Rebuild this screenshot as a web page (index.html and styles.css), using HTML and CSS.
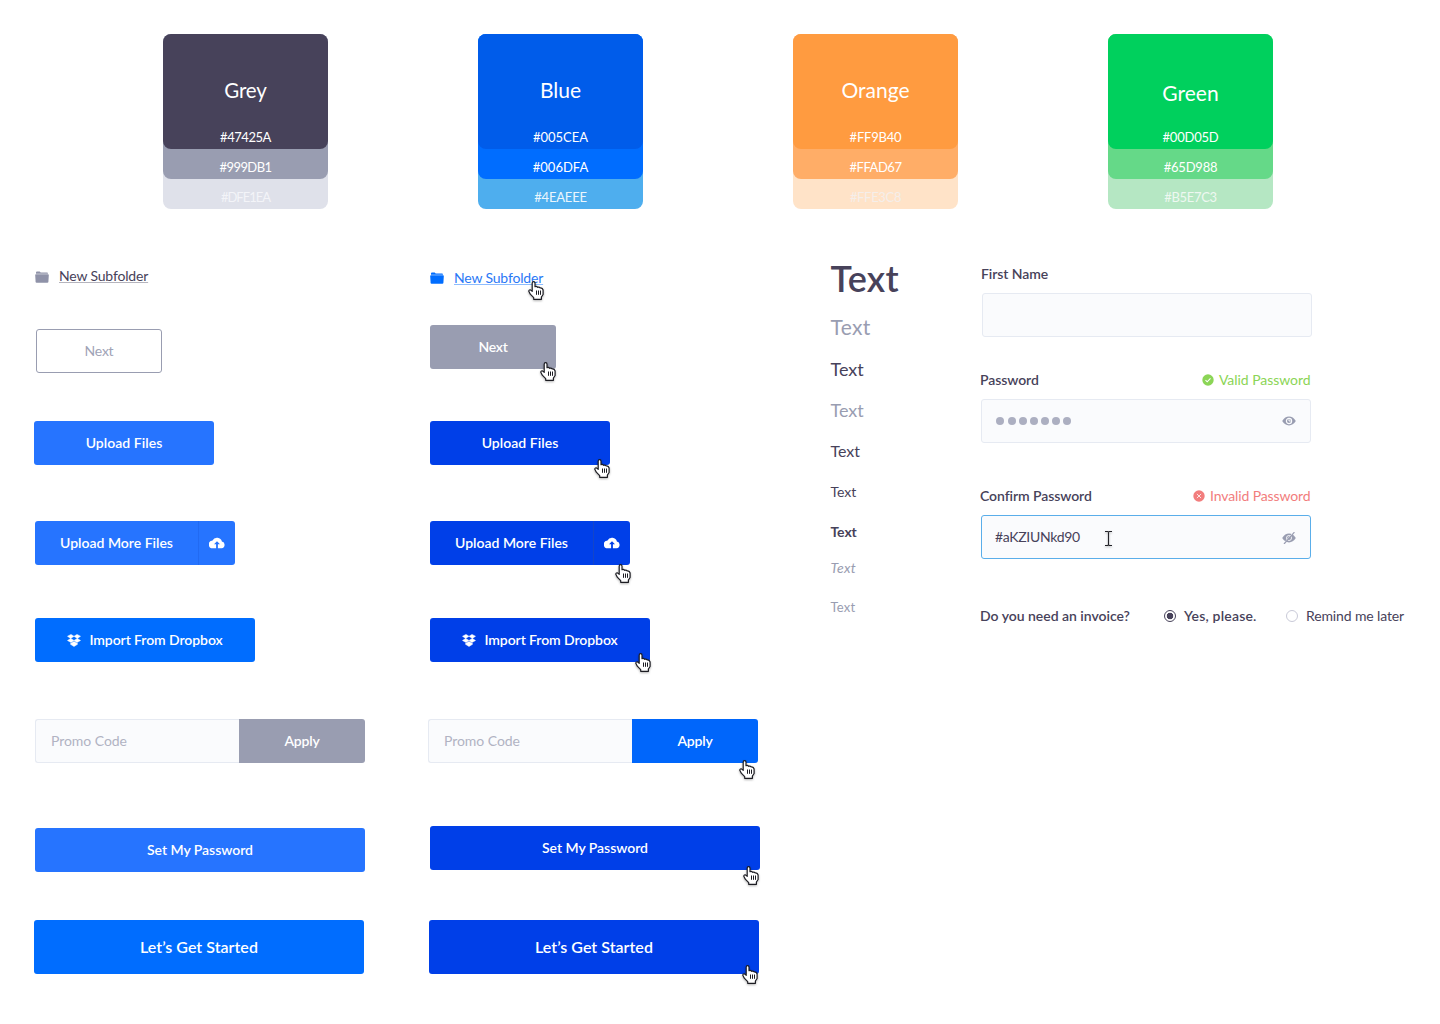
FILE: index.html
```html
<!DOCTYPE html>
<html lang="en">
<head>
<meta charset="utf-8">
<title>Style guide</title>
<link rel="stylesheet" href="styles.css">
</head>
<body>
<svg class="defs" aria-hidden="true">
  <symbol id="hand" viewBox="0 0 18 21">
    <path d="M4.2 10.3V2.3Q4.2.7 5.6.7T7 2.3V5.7Q8.600 5 9.700 6.300Q11.200 5.700 12.200 7Q14.600 6.700 15.100 9V13.500L13.400 16V18.300H5.700V16.600L2.300 13.200L.8 10.300Q.8 8.600 2.400 8.900L4.200 10.300Z" fill="#fff" stroke="#1c1c22" stroke-width="1.200" stroke-linejoin="round"/>
    <path d="M8.500 9.500V13.800M10.500 9.500V13.800M12.500 9.500V13.800" stroke="#1c1c22" fill="none"/>
  </symbol>
  <symbol id="folder" viewBox="0 0 14 12">
    <path d="M1 2.800V1.600Q1 .6 2 .6H4.700L5.700 1.600H12Q13 1.600 13 2.800Z"/>
    <path d="M.2 4Q.2 3.200 1 3.200H13Q13.800 3.200 13.800 4L13.400 10.900Q13.300 11.700 12.400 11.700H1.600Q.7 11.700.6 10.900Z"/>
  </symbol>
  <symbol id="cloud" viewBox="0 0 16 12">
    <path fill-rule="evenodd" d="M12.900 4.600A5 5 0 0 0 3.500 3.500 3.900 3.900 0 0 0 4 11.300H12.600A3.400 3.400 0 0 0 12.900 4.600ZM8.900 7.300V11.300H7.100V7.300H5L8 4.200L11 7.300Z"/>
  </symbol>
  <symbol id="dropbox" viewBox="0 0 14 13">
    <path stroke="#fff" stroke-width=".5" d="M4 .4L7 2.300L3.700 4.400L.5 2.300ZM10 .4L13.500 2.300L10.300 4.400L7 2.300ZM.5 6.500L3.700 4.400L7 6.500L4 8.500ZM13.500 6.500L10.300 4.400L7 6.500L10 8.500ZM3.500 9.600L7 7.500L10.500 9.600V10.300L7 12.500L3.500 10.300Z"/>
  </symbol>
</svg>

<header class="palette">
  <div class="tier grey-3">
    <div class="tier grey-2">
      <div class="tier tier-main grey-1"><h2 class="swatch-name snug">Grey</h2><p class="hex tight-4">#47425A</p></div>
      <p class="hex tight-6">#999DB1</p>
    </div>
    <p class="hex tight-9">#DFE1EA</p>
  </div>
  <div class="tier blue-3">
    <div class="tier blue-2">
      <div class="tier tier-main blue-1"><h2 class="swatch-name">Blue</h2><p class="hex">#005CEA</p></div>
      <p class="hex">#006DFA</p>
    </div>
    <p class="hex tight-2">#4EAEEE</p>
  </div>
  <div class="tier orange-3">
    <div class="tier orange-2">
      <div class="tier tier-main orange-1"><h2 class="swatch-name">Orange</h2><p class="hex tight-2">#FF9B40</p></div>
      <p class="hex tight-4">#FFAD67</p>
    </div>
    <p class="hex tight-3">#FFE3C8</p>
  </div>
  <div class="tier green-3">
    <div class="tier green-2">
      <div class="tier tier-main green-1"><h2 class="swatch-name lowered">Green</h2><p class="hex tight-2">#00D05D</p></div>
      <p class="hex tight-2">#65D988</p>
    </div>
    <p class="hex tight-3">#B5E7C3</p>
  </div>
</header>

<main class="guide">
  <section class="column">
    <a class="folder-link"><svg class="folder"><use href="#folder"/></svg><span class="link-text">New Subfolder</span></a>
    <button class="btn next outline">Next</button>
    <button class="btn upload soft">Upload Files</button>
    <button class="btn more soft"><span class="more-label">Upload More Files</span><span class="more-icon"><svg class="cloud"><use href="#cloud"/></svg></span></button>
    <button class="btn import bright"><svg class="dropbox"><use href="#dropbox"/></svg>Import From Dropbox</button>
    <div class="promo"><input class="field promo-field" placeholder="Promo Code"><button class="btn apply muted">Apply</button></div>
    <button class="btn wide soft set">Set My Password</button>
    <button class="btn wide start bright">Let’s Get Started</button>
  </section>

  <section class="column hovered">
    <a class="folder-link"><svg class="folder"><use href="#folder"/></svg><span class="link-text">New Subfolder</span><svg class="hand"><use href="#hand"/></svg></a>
    <button class="btn next muted">Next<svg class="hand"><use href="#hand"/></svg></button>
    <button class="btn upload deep">Upload Files<svg class="hand"><use href="#hand"/></svg></button>
    <button class="btn more deep"><span class="more-label">Upload More Files</span><span class="more-icon"><svg class="cloud"><use href="#cloud"/></svg></span><svg class="hand"><use href="#hand"/></svg></button>
    <button class="btn import deep"><svg class="dropbox"><use href="#dropbox"/></svg>Import From Dropbox<svg class="hand"><use href="#hand"/></svg></button>
    <div class="promo"><input class="field promo-field" placeholder="Promo Code"><button class="btn apply vivid">Apply<svg class="hand"><use href="#hand"/></svg></button></div>
    <button class="btn wide deep set">Set My Password<svg class="hand"><use href="#hand"/></svg></button>
    <button class="btn wide start deep">Let’s Get Started<svg class="hand"><use href="#hand"/></svg></button>
  </section>

  <section class="type-scale">
    <p class="t-display">Text</p>
    <p class="t-20">Text</p>
    <p class="t-18">Text</p>
    <p class="t-18 t-muted">Text</p>
    <p class="t-16">Text</p>
    <p class="t-14">Text</p>
    <p class="t-bold">Text</p>
    <p class="t-italic">Text</p>
    <p class="t-13">Text</p>
  </section>

  <form class="form">
    <div class="label-row first-label"><label class="label">First Name</label></div>
    <input class="field first-field">

    <div class="label-row password-label">
      <label class="label">Password</label>
      <span class="status valid"><svg class="status-icon" viewBox="0 0 12 12"><circle cx="6" cy="6" r="5.700" fill="currentColor"/><path d="M3.500 6.200L5.200 7.800L8.500 4.400" fill="none" stroke="#fff" stroke-width="1.100"/></svg>Valid Password</span>
    </div>
    <div class="field password-field">
      <span class="dots"><i class="dot"></i><i class="dot"></i><i class="dot"></i><i class="dot"></i><i class="dot"></i><i class="dot"></i><i class="dot"></i></span>
      <svg class="eye" viewBox="0 0 14 10"><path d="M.2 5Q3 .6 7 .6T13.800 5Q11 9.400 7 9.400T.2 5Z" fill="#999db1"/><circle cx="7" cy="5" r="2.600" fill="#999db1" stroke="#fafbfd" stroke-width="1.200"/><path d="M7 5V3.300M7 5H8.700" stroke="#fafbfd" stroke-width="1"/></svg>
    </div>

    <div class="label-row confirm-label">
      <label class="label">Confirm Password</label>
      <span class="status invalid"><svg class="status-icon" viewBox="0 0 12 12"><circle cx="6" cy="6" r="5.700" fill="currentColor"/><path d="M3.900 3.900L8.100 8.100M8.100 3.900L3.900 8.100" stroke="#fff" stroke-width=".8"/></svg>Invalid Password</span>
    </div>
    <div class="field confirm-field">
      <span class="typed">#aKZIUNkd90</span>
      <svg class="eye eye-off" viewBox="0 0 14 12"><path d="M.2 6Q3 1.600 7 1.600T13.800 6Q11 10.400 7 10.400T.2 6Z" fill="#999db1"/><circle cx="7" cy="6" r="2.500" fill="#999db1" stroke="#fafbfd" stroke-width=".9"/><path d="M2.100 11.100L11 .9" stroke="#fafbfd" stroke-width="1"/><path d="M2 12L12.400.2" stroke="#999db1" stroke-width="1.200"/></svg>
      <svg class="ibeam" viewBox="0 0 9 17"><path d="M1 1.500H3.500L4.500 2L5.500 1.500H8M4.500 2V15M1 15.500H3.500L4.500 15L5.500 15.500H8" fill="none" stroke="#222228" stroke-width="1.100"/></svg>
    </div>

    <div class="invoice">
      <span class="label question">Do you need an invoice?</span>
      <label class="option chosen"><i class="radio radio-on"></i>Yes, please.</label>
      <label class="option later"><i class="radio"></i>Remind me later</label>
    </div>
  </form>
</main>
</body>
</html>
```

FILE: styles.css
```css
* { box-sizing: border-box; margin: 0; }

body {
  min-height: 1024px;
  background: #fff;
  color: #47425a;
  font: 14px/20px Lato, "Open Sans", sans-serif;
}

.defs { display: none; }

/* Colour swatches: each shade wraps the darker one above it */
.palette { display: flex; gap: 150px; padding: 34px 0 0 163px; }
.tier { width: 165px; padding-bottom: 4px; border-radius: 8px; color: #fff; text-align: center; }
.tier-main { padding-top: 44px; }
.swatch-name { height: 24px; margin-bottom: 27px; font-size: 21px; font-weight: 400; line-height: 24px; }
.swatch-name.snug { font-size: 20.500px; letter-spacing: -.1px; }
.swatch-name.lowered { padding-top: 3px; }
.hex { height: 16px; font-size: 13px; line-height: 17px; letter-spacing: 0; }
.tier > .tier + .hex { margin-top: 10px; }
.tight-2 { letter-spacing: -.2px; }
.tight-3 { letter-spacing: -.33px; }
.tight-4 { letter-spacing: -.45px; }
.tight-6 { letter-spacing: -.6px; }
.tight-9 { letter-spacing: -1px; }

.grey-1 { background: #47425a; }
.grey-2 { background: #999db1; }
.grey-3 { background: #dfe1ea; }
.blue-1 { background: #005cea; }
.blue-2 { background: #006dff; }
.blue-3 { background: #4eaeee; }
.orange-1 { background: #ff9b40; }
.orange-2 { background: #ffad67; }
.orange-3 { background: #ffe3c8; }
.green-1 { background: #00d05d; }
.green-2 { background: #65d988; }
.green-3 { background: #b5e7c3; }
.grey-3 > .hex { color: #f3f4f8; }
.blue-3 > .hex { color: #eaf6fd; }
.orange-3 > .hex { color: #f5eeea; }
.green-3 > .hex { color: #eef8f1; }

.guide { display: grid; grid-template-columns: 394px 402px 150px 440px; padding: 0 0 50px 34px; }
.column { display: flex; flex-direction: column; align-items: flex-start; }

/* Links */
.folder-link { position: relative; display: flex; align-items: center; height: 20px; margin: 57px 0 0 1px; }
.folder { width: 14px; height: 12px; margin: 2px 10px 0 0; fill: #8f92a8; }
.link-text { letter-spacing: -.17px; text-decoration: underline; text-decoration-color: #b5b4bd; text-decoration-thickness: 1px; text-decoration-skip-ink: none; text-underline-offset: 1px; }
.hovered .folder-link { margin: 59px 0 0 2px; color: #2a78f6; }
.hovered .folder { margin-top: 0; fill: #006dff; }
.hovered .link-text { text-decoration-color: #8dbcff; }

/* Buttons */
.btn { position: relative; display: flex; align-items: center; justify-content: center; height: 44px; padding: 0; border: 0; border-radius: 3px; color: #fff; font: 600 14px/20px Lato, "Open Sans", sans-serif; overflow: visible; }
.outline { border: 1px solid #999db1; background: #fff; color: #a0a3b6; font-weight: 400; }
.muted { background: #999db1; }
.soft { background: #2674ff; }
.bright { background: #006dff; }
.vivid { background: #0066fb; }
.deep { background: #003fe8; }
.next { width: 126px; margin: 43px 0 0 2px; letter-spacing: -.25px; }
.upload { width: 180px; margin-top: 48px; letter-spacing: .05px; }
.more { justify-content: flex-start; width: 200px; margin: 56px 0 0 1px; }
.more-label { width: 163px; }
.more-icon { display: flex; align-items: center; justify-content: center; width: 37px; height: 44px; border-left: 1px solid #216af2; }
.deep .more-icon { border-color: #1445c8; }
.cloud { width: 16px; height: 12px; fill: #fff; }
.import { width: 220px; margin: 53px 0 0 1px; letter-spacing: -.08px; }
.dropbox { width: 14px; height: 13px; margin-right: 8px; fill: #fff; }
.promo { display: flex; margin: 57px 0 0 1px; }
.apply { width: 126px; border-radius: 0 3px 3px 0; letter-spacing: -.2px; }
.wide { width: 330px; }
.set { margin: 65px 0 0 1px; letter-spacing: -.03px; }
.start { height: 54px; margin-top: 48px; font-size: 16px; letter-spacing: .03px; }

.hovered .next { margin: 37px 0 0 2px; }
.hovered .upload { margin: 52px 0 0 2px; }
.hovered .more, .hovered .import { margin-left: 2px; }
.hovered .promo { margin-left: 0; }
.hovered .set { margin: 63px 0 0 2px; }
.hovered .start { margin: 50px 0 0 1px; }

/* Pointer resting on the hovered control */
.hand { position: absolute; z-index: 1; width: 18px; height: 21px; right: -1px; bottom: -17px; filter: drop-shadow(0 1px 1px rgba(0, 0, 0, .3)); }
.folder-link .hand { left: 98px; top: 13px; }
.next .hand { bottom: -14px; right: -2px; }
.upload .hand { bottom: -15px; right: -2px; }
.more .hand { bottom: -20px; right: -3px; }
.import .hand { bottom: -12px; right: -3px; }
.apply .hand { bottom: -18px; right: 1px; }
.start .hand { bottom: -12px; }

/* Fields */
.field { width: 330px; height: 44px; border: 1px solid #e6eaf2; border-radius: 3px; background: #fafbfd; color: #47425a; font: 14px/20px Lato, "Open Sans", sans-serif; }
.promo-field { width: 204px; padding: 0 15px 2px; border-right: 0; border-radius: 3px 0 0 3px; letter-spacing: -.05px; }
.promo-field::placeholder { color: #b1b3c3; opacity: 1; }

/* Type scale */
.type-scale { padding-left: .5px; }
.t-display { margin-top: 49px; font-size: 36px; font-weight: 600; line-height: 41px; letter-spacing: .2px; }
.t-20 { margin-top: 16px; color: #999db1; font-size: 21px; line-height: 24px; letter-spacing: .3px; }
.t-18 { margin-top: 19px; font-size: 18px; line-height: 22px; letter-spacing: 0; }
.t-muted { color: #999db1; }
.t-16 { margin-top: 20px; font-size: 16px; }
.t-14 { margin-top: 21px; }
.t-bold { margin-top: 20px; font-weight: 700; letter-spacing: -.1px; }
.t-italic { margin-top: 16px; color: #999db1; font-style: italic; letter-spacing: .3px; }
.t-13 { margin-top: 19px; color: #999db1; font-size: 13px; letter-spacing: .2px; }

/* Form */
.label-row { display: flex; justify-content: space-between; width: 330.500px; height: 20px; }
.label { font-weight: 600; letter-spacing: -.08px; }
.first-label { margin: 55px 0 9px 1px; }
.first-field { display: block; margin-left: 2px; padding: 0 14px; }
.password-label { margin: 33px 0 9px; }
.confirm-label { margin: 43px 0 9px; }
.status { display: flex; align-items: center; letter-spacing: -.05px; }
.status-icon { width: 12px; height: 12px; margin: -1px 5px 0 0; }
.valid { color: #8bd556; }
.invalid { color: #f27d7d; letter-spacing: -.12px; }
.password-field, .confirm-field { position: relative; display: flex; align-items: center; justify-content: space-between; margin-left: 1px; padding: 0 14px; }
.confirm-field { padding-left: 13px; border-color: #5aaeea; }
.dots { display: flex; gap: 3px; }
.dot { width: 8px; height: 8px; border-radius: 50%; background: #acafc1; }
.dot:first-child { margin-right: 1px; }
.typed { letter-spacing: -.32px; }
.eye { width: 14px; height: 10px; }
.eye-off { height: 12px; margin-top: 2px; }
.ibeam { position: absolute; left: 122px; top: 14px; width: 9px; height: 17px; filter: drop-shadow(0 1px 1px rgba(0, 0, 0, .3)); }
.invoice { display: flex; margin-top: 47px; white-space: nowrap; }
.question { width: 184px; letter-spacing: -.02px; }
.option { display: flex; align-items: center; gap: 8px; }
.chosen { width: 122px; font-weight: 600; letter-spacing: .2px; }
.later { letter-spacing: -.13px; }
.radio { width: 12px; height: 12px; border: 1px solid #c9cad8; border-radius: 50%; }
.radio-on { border-color: #47425a; background: radial-gradient(circle, #47425a 3px, #fff 3.600px); }
```
